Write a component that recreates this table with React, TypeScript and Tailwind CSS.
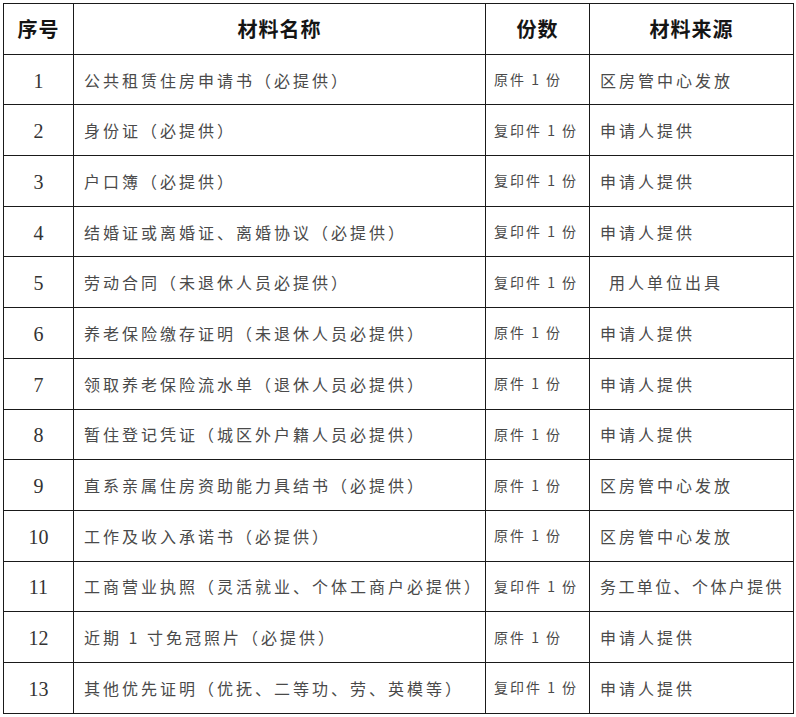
import React from "react";

type Row = { no: number; name: string; copies: string; source: string; srcClass?: string };

const rows: Row[] = [
  { no: 1, name: "公共租赁住房申请书（必提供）", copies: "原件 1 份", source: "区房管中心发放" },
  { no: 2, name: "身份证（必提供）", copies: "复印件 1 份", source: "申请人提供" },
  { no: 3, name: "户口簿（必提供）", copies: "复印件 1 份", source: "申请人提供" },
  { no: 4, name: "结婚证或离婚证、离婚协议（必提供）", copies: "复印件 1 份", source: "申请人提供" },
  { no: 5, name: "劳动合同（未退休人员必提供）", copies: "复印件 1 份", source: "用人单位出具", srcClass: "pl-[19px] tracking-[3px]" },
  { no: 6, name: "养老保险缴存证明（未退休人员必提供）", copies: "原件 1 份", source: "申请人提供" },
  { no: 7, name: "领取养老保险流水单（退休人员必提供）", copies: "原件 1 份", source: "申请人提供" },
  { no: 8, name: "暂住登记凭证（城区外户籍人员必提供）", copies: "原件 1 份", source: "申请人提供" },
  { no: 9, name: "直系亲属住房资助能力具结书（必提供）", copies: "原件 1 份", source: "区房管中心发放" },
  { no: 10, name: "工作及收入承诺书（必提供）", copies: "原件 1 份", source: "区房管中心发放" },
  { no: 11, name: "工商营业执照（灵活就业、个体工商户必提供）", copies: "复印件 1 份", source: "务工单位、个体户提供", srcClass: "pl-[10px] tracking-[2.4px]" },
  { no: 12, name: "近期 1 寸免冠照片（必提供）", copies: "原件 1 份", source: "申请人提供" },
  { no: 13, name: "其他优先证明（优抚、二等功、劳、英模等）", copies: "复印件 1 份", source: "申请人提供" },
];

const cjk = "font-['Noto_Sans_CJK_SC',sans-serif]";

export default function App() {
  return (
    <div className="w-[796px] h-[717px] bg-white pt-[3px] pl-[3px]">
      <table className="border-collapse table-fixed w-[790px]">
        <colgroup>
          <col className="w-[70px]" />
          <col className="w-[412px]" />
          <col className="w-[104px]" />
          <col className="w-[204px]" />
        </colgroup>
        <thead>
          <tr className="h-[50.7px]">
            {["序号", "材料名称", "份数", "材料来源"].map((h) => (
              <th
                key={h}
                className={`border border-[#1a1a1a] p-0 text-center align-middle text-[20px] font-bold text-[#151515] tracking-[1px] ${cjk}`}
              >
                {h}
              </th>
            ))}
          </tr>
        </thead>
        <tbody>
          {rows.map((r) => (
            <tr key={r.no} className="h-[50.7px]">
              <td className="border border-[#1a1a1a] p-0 pt-[2px] text-center align-middle text-[20px] text-[#333] font-['Liberation_Serif',serif]">
                {r.no}
              </td>
              <td
                className={`border border-[#1a1a1a] p-0 pl-[10px] align-middle text-[16px] text-[#4a4a4a] whitespace-nowrap tracking-[3px] ${cjk}`}
              >
                {r.name}
              </td>
              <td
                className={`border border-[#1a1a1a] p-0 pl-[8px] align-middle text-[14px] text-[#4a4a4a] whitespace-pre tracking-[2px] ${cjk}`}
              >
                {r.copies}
              </td>
              <td
                className={`border border-[#1a1a1a] p-0 align-middle text-[16px] text-[#4a4a4a] whitespace-nowrap ${r.srcClass ?? "pl-[10px] tracking-[3px]"} ${cjk}`}
              >
                {r.source}
              </td>
            </tr>
          ))}
        </tbody>
      </table>
    </div>
  );
}
